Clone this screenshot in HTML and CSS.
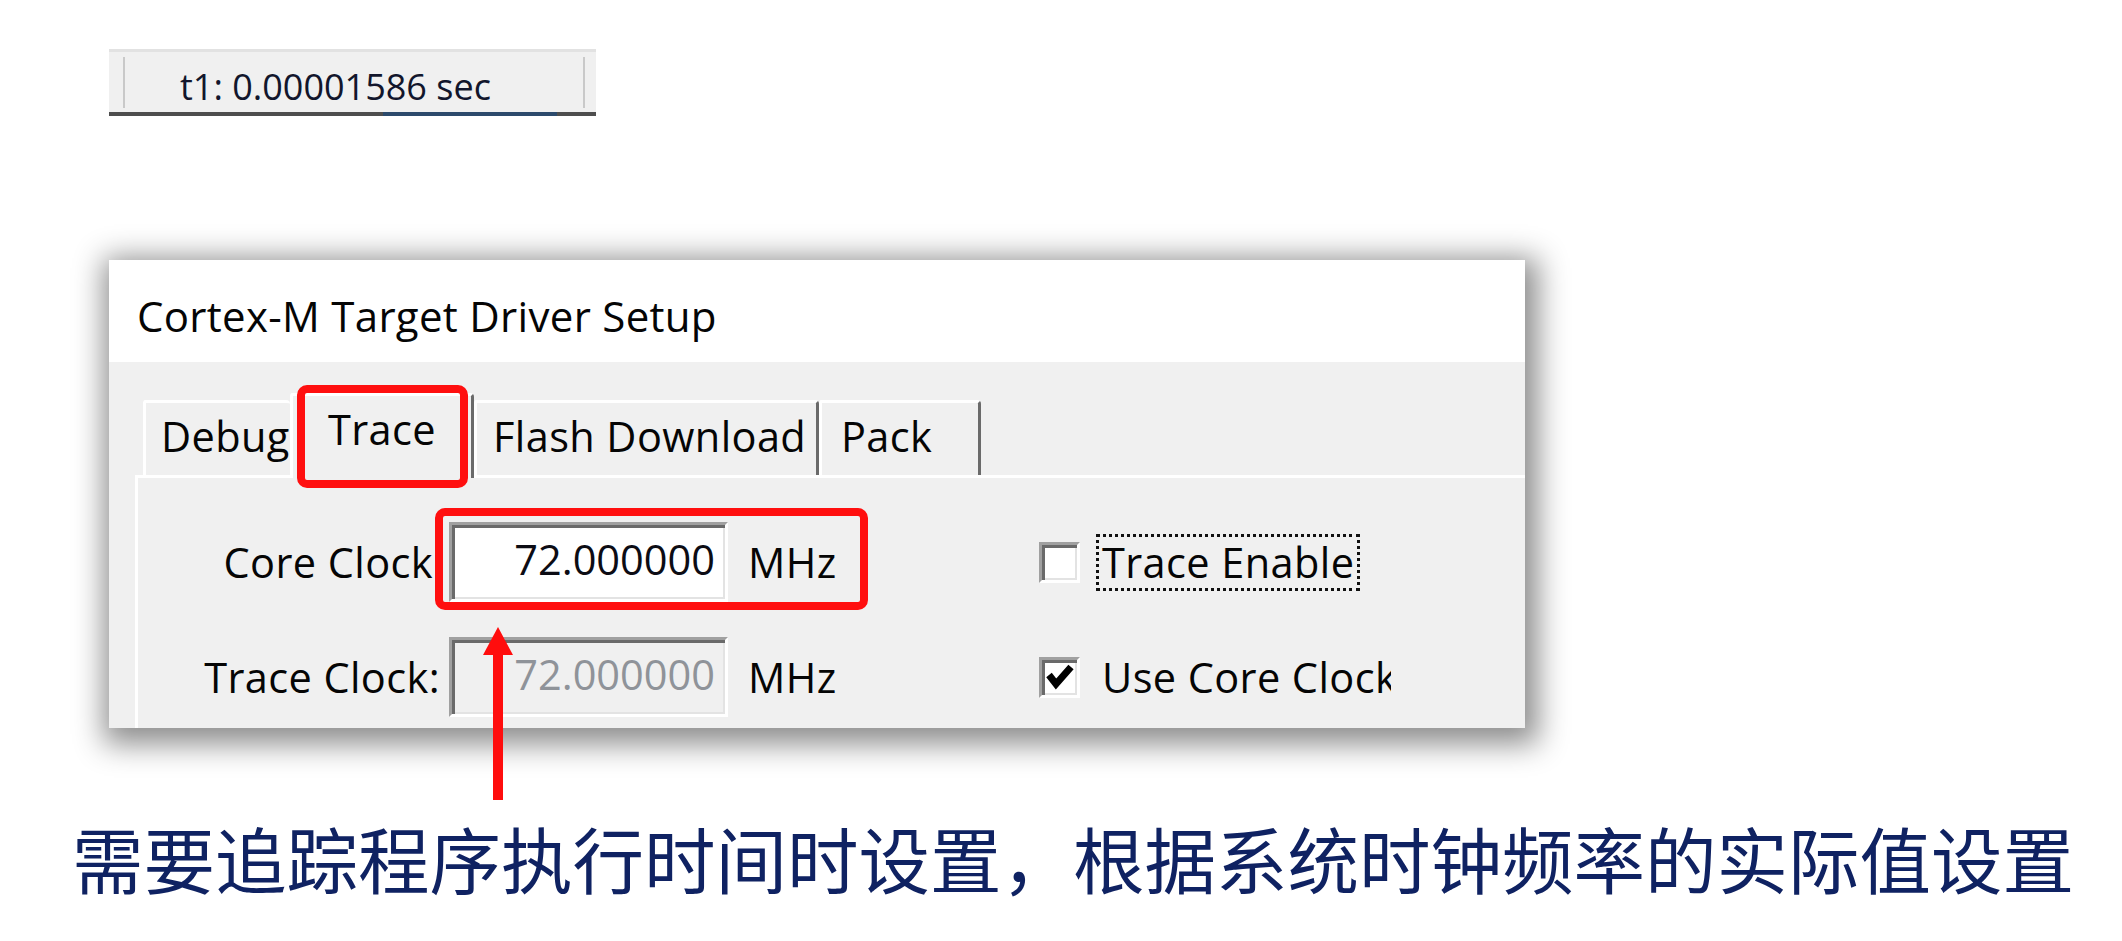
FILE: index.html
```html
<!DOCTYPE html>
<html>
<head>
<meta charset="utf-8">
<link rel="stylesheet" href="styles.css">
</head>
<body>
<div class="page">
  <div class="status">
    <div class="status-bar">
      <span class="sep"></span>
      <span class="status-text">t1: 0.00001586 sec</span>
      <span class="sep sep-end"></span>
    </div>
    <div class="status-edge"></div>
  </div>

  <div class="dialog">
    <div class="title">Cortex-M Target Driver Setup</div>
    <div class="dlg-body">
      <div class="tabs">
        <div class="tab tab-debug">Debug</div>
        <div class="tab tab-trace">Trace</div>
        <div class="tab tab-flash">Flash Download</div>
        <div class="tab tab-pack">Pack</div>
      </div>
      <div class="panel">
        <div class="row">
          <div class="label lbl-core">Core Clock</div>
          <div class="field">72.000000</div>
          <div class="unit">MHz</div>
          <div class="check"></div>
          <div class="check-label focus">Trace Enable</div>
        </div>
        <div class="row row-second">
          <div class="label lbl-trace">Trace Clock:</div>
          <div class="field disabled">72.000000</div>
          <div class="unit">MHz</div>
          <div class="check"><svg class="tick" viewBox="0 0 35 35" width="35" height="35"><path d="M7 15 L14 24 L29 7" fill="none" stroke="#000" stroke-width="7"/></svg></div>
          <div class="check-label clip">Use Core Clock</div>
        </div>
      </div>
    </div>
  </div>

  <p class="caption">需要追踪程序执行时间时设置，根据系统时钟频率的实际值设置</p>

  <div class="mark mark-tab"></div>
  <div class="mark mark-field"></div>
  <svg class="arrow" viewBox="0 0 36 177" width="36" height="177">
    <polygon points="18,2 3,30 33,30" fill="#ff0d0d"/>
    <rect x="13" y="29" width="10" height="146" fill="#ff0d0d"/>
  </svg>
</div>
</body>
</html>
```

FILE: styles.css
```css
html, body {
  margin: 0;
  padding: 0;
  background: #ffffff;
}

body {
  width: 2122px;
  height: 941px;
  overflow: hidden;
}

.page {
  position: relative;
  width: 2122px;
  height: 941px;
  padding-top: 49px;
  box-sizing: border-box;
  font-family: "Open Sans", "Noto Sans", sans-serif;
  color: #050505;
}

/* ---------- status strip ---------- */
.status {
  margin-left: 109px;
  width: 487px;
  border-top: 3px solid #e2e2e2;
}

.status-bar {
  height: 60px;
  background: #f0f0f0;
  display: flex;
  align-items: center;
}

.sep {
  width: 2px;
  height: 51px;
  background: #c9c9c9;
  margin-left: 14px;
  flex: none;
}

.sep-end {
  margin-left: auto;
  margin-right: 11px;
}

.status-text {
  margin-left: 55px;
  padding-top: 8px;
  font-size: 36px;
  line-height: 49px;
  color: #12162c;
  white-space: nowrap;
}

.status-edge {
  height: 4px;
  background: linear-gradient(to right, #4e4e4e 0 274px, #2c4a6c 274px 448px, #4e4e4e 448px);
}

/* ---------- dialog ---------- */
.dialog {
  margin-top: 144px;
  margin-left: 109px;
  width: 1416px;
  height: 468px;
  overflow: hidden;
  box-shadow: 4px 7px 28px 9px rgba(0, 0, 0, 0.45);
}

.title {
  height: 102px;
  box-sizing: border-box;
  padding: 27px 0 0 28px;
  background: #ffffff;
  font-size: 42px;
  letter-spacing: 0.3px;
  line-height: 57px;
  white-space: nowrap;
}

.dlg-body {
  height: 366px;
  background: #f0f0f0;
  font-size: 41.5px;
  letter-spacing: 0.4px;
}

.tabs {
  height: 113px;
  box-sizing: border-box;
  padding-left: 34px;
  display: flex;
  align-items: flex-end;
}

.tab {
  box-sizing: border-box;
  height: 75px;
  border-top: 3px solid #ffffff;
  border-left: 3px solid #ffffff;
  border-right: 3px solid #6a6a6a;
  border-radius: 3px 4px 0 0;
  background: #f0f0f0;
  padding-top: 6px;
  line-height: 54px;
  white-space: nowrap;
}

.tab-debug {
  width: 147px;
  padding-left: 15px;
  border-right: none;
}

.tab-trace {
  position: relative;
  z-index: 1;
  width: 184px;
  height: 85px;
  margin-bottom: -3px;
  padding-left: 35px;
}

.tab-flash {
  width: 345px;
  padding-left: 16px;
}

.tab-pack {
  width: 162px;
  padding-left: 19px;
}

.panel {
  margin-left: 26px;
  height: 253px;
  box-sizing: border-box;
  border-top: 3px solid #ffffff;
  border-left: 3px solid #ffffff;
  padding-top: 44px;
}

.row {
  height: 80px;
  display: flex;
  align-items: center;
}

.row-second {
  margin-top: 35px;
}

.label {
  width: 311px;
  box-sizing: border-box;
  text-align: right;
  line-height: 54px;
  white-space: nowrap;
}

.lbl-core {
  padding-right: 16px;
}

.lbl-trace {
  padding-right: 9px;
}

.field {
  width: 279px;
  height: 80px;
  box-sizing: border-box;
  border-top: 3px solid #a0a0a0;
  border-left: 3px solid #a0a0a0;
  border-right: 3px solid #ffffff;
  border-bottom: 3px solid #ffffff;
  box-shadow: inset 3px 3px 0 #6a6a6a, inset -2px -2px 0 #e3e3e3;
  background: #ffffff;
  text-align: right;
  padding-right: 10px;
  line-height: 68px;
  letter-spacing: 0;
  color: #0c0c14;
}

.field.disabled {
  background: #f0f0f0;
  color: #8f9399;
}

.unit {
  width: 311px;
  box-sizing: border-box;
  padding-left: 20px;
  line-height: 54px;
}

.check {
  width: 41px;
  height: 41px;
  box-sizing: border-box;
  border-top: 3px solid #a0a0a0;
  border-left: 3px solid #a0a0a0;
  border-right: 3px solid #ffffff;
  border-bottom: 3px solid #ffffff;
  box-shadow: inset 3px 3px 0 #6a6a6a, inset -2px -2px 0 #e3e3e3;
  background: #ffffff;
  flex: none;
}

.tick {
  display: block;
}

.check-label {
  margin-left: 16px;
  height: 57px;
  box-sizing: border-box;
  border: 3px solid transparent;
  padding: 0 3px;
  line-height: 51px;
  white-space: nowrap;
}

.check-label.focus {
  border: 3px dotted #111111;
}

.check-label.clip {
  width: 298px;
  overflow: hidden;
}

/* ---------- caption ---------- */
.caption {
  margin: 93px 0 0 72px;
  font-family: "Noto Sans CJK SC", "Noto Sans", sans-serif;
  font-weight: 400;
  font-size: 71.5px;
  line-height: 72px;
  color: #0f2262;
  white-space: nowrap;
}

/* ---------- annotations ---------- */
.mark {
  position: absolute;
  box-sizing: border-box;
  border: 8px solid #ff0f0f;
  border-radius: 10px;
}

.mark-tab {
  left: 297px;
  top: 385px;
  width: 171px;
  height: 103px;
  z-index: 3;
}

.mark-field {
  left: 435px;
  top: 508px;
  width: 433px;
  height: 102px;
  z-index: 3;
}

.arrow {
  position: absolute;
  left: 480px;
  top: 625px;
  z-index: 3;
}
```
